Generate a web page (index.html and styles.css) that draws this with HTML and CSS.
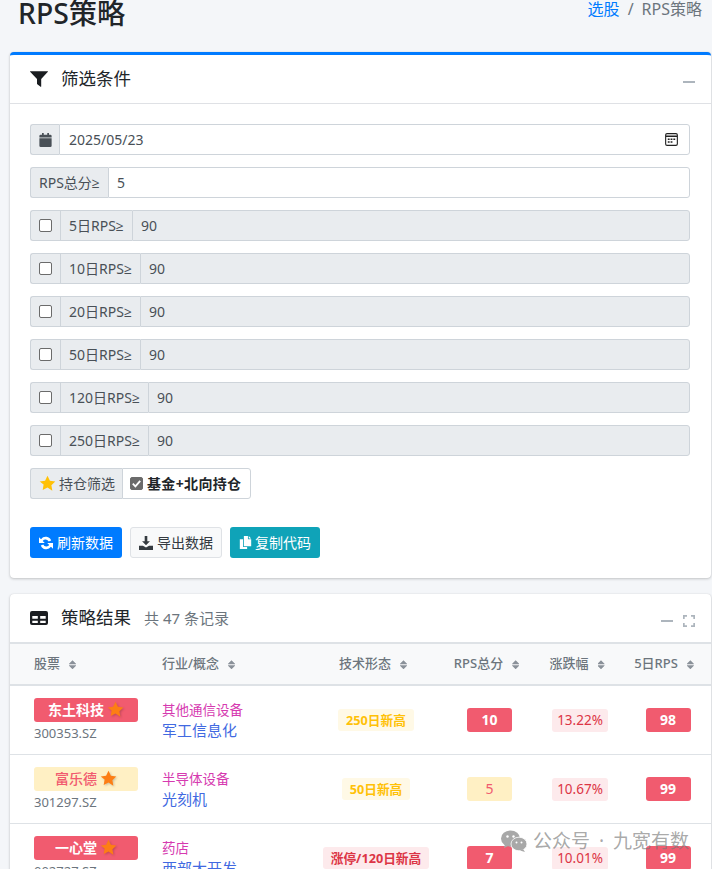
FILE: index.html
```html
<!DOCTYPE html>
<html lang="zh-CN">
<head>
<meta charset="utf-8">
<title>RPS策略</title>
<link rel="stylesheet" href="styles.css">
</head>
<body>
<svg class="defs" width="0" height="0"><defs><path id="st" d="M12 1l3.400 7 7.600 1.100-5.500 5.400 1.300 7.600L12 17.500 5.200 21.100l1.300-7.600L1 9.100 8.600 8z"/></defs></svg>
<div class="page">
  <header class="page-head">
    <h1>RPS策略</h1>
    <nav class="crumbs"><a href="#">选股</a><span class="sep">/</span><span>RPS策略</span></nav>
  </header>

  <section class="card card-primary">
    <div class="card-head">
      <svg class="head-icon" viewBox="0 0 18 16"><path d="M0.300 0.200h17.400c.300 0 .400.300.200.500L11.200 8v7.500c0 .400-.400.500-.600.300L7 13V8L.1.700C-.1.500 0 .200.300.200z" fill="#1a1d21"/></svg>
      <h3>筛选条件</h3>
      <div class="tools"><span class="minus"></span></div>
    </div>
    <div class="card-body">
      <div class="group">
        <span class="addon addon-icon"><svg viewBox="0 0 14 16" width="13" height="14"><path d="M3 0h2v2h4V0h2v2h1.500A1.500 1.500 0 0 1 14 3.500V5H0V3.500A1.500 1.500 0 0 1 1.500 2H3zM0 6h14v8.500a1.500 1.500 0 0 1-1.500 1.500h-11A1.500 1.500 0 0 1 0 14.500z" fill="#495057"/></svg></span>
        <span class="field field-date">2025/05/23
          <svg class="cal" viewBox="0 0 14 14" width="13" height="13"><rect x="0.700" y="0.700" width="12.600" height="12.600" rx="1.500" fill="none" stroke="#222" stroke-width="1.200"/><path d="M1 3.500h12" stroke="#222" stroke-width="1.600"/><path d="M3 6h2v1.500H3zM6 6h2v1.500H6zM9 6h2v1.500H9zM3 9h2v1.500H3zM6 9h2v1.500H6z" fill="#222"/></svg>
        </span>
      </div>
      <div class="group">
        <span class="addon">RPS总分≥</span>
        <span class="field">5</span>
      </div>
      <div class="group">
        <span class="addon addon-check"><span class="box"></span></span>
        <span class="addon">5日RPS≥</span>
        <span class="field field-off">90</span>
      </div>
      <div class="group">
        <span class="addon addon-check"><span class="box"></span></span>
        <span class="addon">10日RPS≥</span>
        <span class="field field-off">90</span>
      </div>
      <div class="group">
        <span class="addon addon-check"><span class="box"></span></span>
        <span class="addon">20日RPS≥</span>
        <span class="field field-off">90</span>
      </div>
      <div class="group">
        <span class="addon addon-check"><span class="box"></span></span>
        <span class="addon">50日RPS≥</span>
        <span class="field field-off">90</span>
      </div>
      <div class="group">
        <span class="addon addon-check"><span class="box"></span></span>
        <span class="addon">120日RPS≥</span>
        <span class="field field-off">90</span>
      </div>
      <div class="group">
        <span class="addon addon-check"><span class="box"></span></span>
        <span class="addon">250日RPS≥</span>
        <span class="field field-off">90</span>
      </div>
      <div class="group group-inline">
        <span class="addon"><svg class="star-y" viewBox="0 0 24 24" width="17" height="17"><use href="#st" fill="#ffc107"/></svg>持仓筛选</span>
        <span class="field field-check">
          <span class="box box-on"><svg viewBox="0 0 14 14" width="13" height="13"><path d="M3 7.200l2.800 2.800L11 4.300" fill="none" stroke="#fff" stroke-width="2"/></svg></span>
          <b>基金+北向持仓</b>
        </span>
      </div>
      <div class="actions">
        <button class="btn btn-blue"><svg viewBox="1 1 14 14" width="14" height="14"><path d="M13.200 5.600A5.800 5.800 0 0 0 3 4.200L1 2.200V8h5.800L4.700 5.900a3.500 3.500 0 0 1 6 0.700zM2.800 10.400A5.800 5.800 0 0 0 13 11.800l2 2V8H9.200l2.100 2.100a3.500 3.500 0 0 1-6 -0.700z" fill="#fff"/></svg>刷新数据</button>
        <button class="btn btn-light"><svg viewBox="0 0 16 16" width="14" height="14"><path d="M6.500 0h3v6h3L8 10.500 3.500 6h3zM0 11h4.500L8 13l3.500-2H16v5H0z" fill="#343a40"/></svg>导出数据</button>
        <button class="btn btn-teal"><svg viewBox="0 0 16 16" width="13" height="15"><path d="M6 0h5v4h4v8.500H6zM12 0l3 3h-3zM1 4h4v9.500h5V16H1z" fill="#fff"/></svg>复制代码</button>
      </div>
    </div>
  </section>

  <section class="card">
    <div class="card-head card-head-table">
      <svg class="head-icon" viewBox="0 0 18 16"><path fill-rule="evenodd" d="M2 1h14a2 2 0 0 1 2 2v10a2 2 0 0 1-2 2H2a2 2 0 0 1-2-2V3a2 2 0 0 1 2-2zM2.300 6v2.700h5.500V6zm7.900 0v2.700h5.500V6zM2.300 10.700v2.300h5.500v-2.300zm7.900 0v2.300h5.500v-2.300z" fill="#1a1d21"/></svg>
      <h3>策略结果</h3>
      <span class="count">共 47 条记录</span>
      <div class="tools"><span class="minus"></span>
        <svg class="expand" viewBox="0 0 12 12" width="12" height="12"><path d="M0.800 4V0.800H4M8 0.800h3.200V4M11.200 8v3.200H8M4 11.200H0.800V8" fill="none" stroke="#adb5bd" stroke-width="1.800"/></svg>
      </div>
    </div>
    <table class="results">
      <colgroup><col class="c1"><col class="c2"><col class="c3"><col class="c4"><col class="c5"><col class="c6"></colgroup>
      <thead>
        <tr>
          <th class="left first">股票<span class="sort"></span></th>
          <th class="left">行业/概念<span class="sort"></span></th>
          <th>技术形态<span class="sort"></span></th>
          <th>RPS总分<span class="sort"></span></th>
          <th>涨跌幅<span class="sort"></span></th>
          <th class="last">5日RPS<span class="sort"></span></th>
        </tr>
      </thead>
      <tbody>
        <tr>
          <td class="first"><span class="name name-red">东土科技<svg class="star" viewBox="0 0 24 24"><use href="#st"/></svg></span><div class="code">300353.SZ</div></td>
          <td class="left"><div class="ind">其他通信设备</div><div class="con">军工信息化</div></td>
          <td><span class="tag tag-y">250日新高</span></td>
          <td><span class="score score-red">10</span></td>
          <td><span class="pct">13.22%</span></td>
          <td class="last"><span class="score score-red">98</span></td>
        </tr>
        <tr>
          <td class="first"><span class="name name-y">富乐德<svg class="star" viewBox="0 0 24 24"><use href="#st"/></svg></span><div class="code">301297.SZ</div></td>
          <td class="left"><div class="ind">半导体设备</div><div class="con">光刻机</div></td>
          <td><span class="tag tag-y">50日新高</span></td>
          <td><span class="score score-y">5</span></td>
          <td><span class="pct">10.67%</span></td>
          <td class="last"><span class="score score-red">99</span></td>
        </tr>
        <tr>
          <td class="first"><span class="name name-red">一心堂<svg class="star" viewBox="0 0 24 24"><use href="#st"/></svg></span><div class="code">002727.SZ</div></td>
          <td class="left"><div class="ind">药店</div><div class="con">西部大开发</div></td>
          <td><span class="tag tag-r">涨停/120日新高</span></td>
          <td><span class="score score-red">7</span></td>
          <td><span class="pct">10.01%</span></td>
          <td class="last"><span class="score score-red">99</span></td>
        </tr>
      </tbody>
    </table>
  </section>
</div>
<div class="watermark">
  <svg viewBox="0 0 26 22" width="26" height="22"><ellipse cx="9.500" cy="8.500" rx="9.500" ry="8" fill="#a8a8a8"/><path d="M4 14l-1 4 5-2.500z" fill="#a8a8a8"/><ellipse cx="18" cy="14" rx="8" ry="6.800" fill="#a8a8a8" stroke="#fff" stroke-width="0.800"/><path d="M22 19l2 3-5-1.500z" fill="#a8a8a8"/><circle cx="6.500" cy="6.500" r="1.200" fill="#fff"/><circle cx="12.500" cy="6.500" r="1.200" fill="#fff"/><circle cx="15.500" cy="12.500" r="1" fill="#fff"/><circle cx="20.500" cy="12.500" r="1" fill="#fff"/></svg>
  <span>公众号 · 九宽有数</span>
</div>
</body>
</html>
```

FILE: styles.css
```css
* { box-sizing: border-box; }
html, body { margin: 0; height: 869px; overflow: hidden; }
body {
  background: #f4f6f9;
  color: #212529;
  font-family: "Noto Sans", "Open Sans", "Noto Sans CJK SC", sans-serif;
  font-size: 14px;
  line-height: 1.5;
}
.defs { position: absolute; }
.page { padding: 0 1px 0 10px; margin-top: -11px; }
.page-head { display: flex; justify-content: space-between; align-items: flex-start; height: 63px; padding: 0 9px 0 8px; }
.page-head h1 { margin: 0; font-size: 28.300px; font-weight: 500; line-height: 49px; color: #212529; }
.crumbs { font-size: 16px; line-height: 24px; color: #6c757d; padding-top: 8px; }
.crumbs a { color: #007bff; text-decoration: none; }
.sep { margin: 0 8px; }

.card {
  background: #fff;
  border-radius: 4px;
  box-shadow: 0 0 1px rgba(0,0,0,.13), 0 1px 3px rgba(0,0,0,.2);
  margin-bottom: 16px;
  overflow: hidden;
}
.card-primary { border-top: 3px solid #007bff; }
.card-head {
  display: flex; align-items: center;
  height: 49px;
  padding: 0 16px 0 20px;
  border-bottom: 1px solid #dfe1e5;
}
.card-head-table { height: 50px; border-bottom: 2px solid #dee2e6; }
.head-icon { width: 18px; height: 16px; margin-right: 13px; flex: none; }
.card-head h3 { margin: 0 0 2px; font-size: 17.500px; font-weight: 400; line-height: 24px; color: #212529; }
.count { margin-left: 13px; color: #6c757d; font-size: 15px; }
.tools { margin-left: auto; display: flex; align-items: center; gap: 10px; padding-top: 5px; }
.minus { display: block; width: 12px; height: 2px; background: #adb5bd; }
.expand { display: block; }

.card-body { padding: 20px 20px 20px; }
.group { display: flex; height: 31px; margin-bottom: 12px; font-size: 14px; color: #495057; margin-right: 1px; }
.addon {
  display: flex; align-items: center;
  padding: 0 8px;
  background: #e9ecef;
  border: 1px solid #ced4da;
  border-right: 0;
  white-space: nowrap;
}
.group > :first-child { border-radius: 3px 0 0 3px; }
.addon-icon { width: 29px; justify-content: center; padding: 0; }
.addon-check { width: 30px; justify-content: center; padding: 0; }
.field {
  flex: 1;
  display: flex; align-items: center;
  padding: 0 8px;
  background: #fff;
  border: 1px solid #ced4da;
  border-radius: 0 3px 3px 0;
}
.field-date { padding-left: 9px; }
.field-off { background: #e9ecef; }
.cal { margin-left: auto; margin-right: 3px; }
.box {
  display: block; width: 13px; height: 13px;
  background: #fff;
  border: 1px solid #6b6b6b;
  border-radius: 2px;
}
.box-on { background: #6b6b6b; margin-right: 4px; flex: none; }
.box-on svg { display: block; margin: -1px; }
.group-inline { width: 221px; margin-bottom: 0; }
.group-inline .addon { padding: 0 7px 0 8px; }
.star-y { margin-right: 3px; }
.field-check { padding: 0 8px 0 7px; white-space: nowrap; }
.field-check b { color: #212529; font-weight: 700; letter-spacing: .35px; }

.actions { display: flex; gap: 8px; margin-top: 28px; }
.btn {
  display: flex; align-items: center; gap: 4px;
  height: 31px; padding: 0 8px;
  font: inherit; font-size: 14px;
  border: 1px solid transparent;
  border-radius: 3px;
  color: #fff;
}
.btn-blue { background: #007bff; }
.btn-light { background: #f8f9fa; border-color: #dfe2e6; color: #343a40; }
.btn-teal { background: #0fa3b8; gap: 3px; }

.results { width: 100%; table-layout: fixed; border-collapse: separate; border-spacing: 0; }
.c1 { width: 140px; } .c2 { width: 166px; } .c3 { width: 120px; }
.c4 { width: 107px; } .c5 { width: 74px; } .c6 { width: 94px; }
.results th {
  height: 42px; padding: 0 6px 0 0;
  background: #f8f9fa;
  border-bottom: 2px solid #dee2e6;
  font-size: 13px; font-weight: 500;
  color: #6c757d;
  text-align: center;
  white-space: nowrap;
}
.results td { height: 69px; padding: 0; text-align: center; border-bottom: 1px solid #dee2e6; }
.results .left { text-align: left; padding-left: 12px; }
.results .first { text-align: left; padding-left: 24px; }
.results td.last { padding-left: 8px; }
.results th.last { padding: 0; }
.sort {
  display: inline-block; vertical-align: -1px;
  width: 7px; height: 9px; margin-left: 9px;
  background: #8a9199;
  clip-path: polygon(50% 0, 100% 40%, 100% 45%, 0 45%, 0 40%, 50% 0, 0 55%, 100% 55%, 100% 60%, 50% 100%, 0 60%, 0 55%);
}
.name {
  display: flex; align-items: center; justify-content: center;
  width: 104px; height: 24px;
  font-size: 14px; font-weight: 700;
  border-radius: 3px;
}
.name-red { background: #f15b6f; color: #fff; }
.name-y { background: #fff0c4; color: #f15b6f; font-weight: 500; }
.star { width: 17px; height: 17px; margin-left: 3px; fill: #fd7e14; filter: drop-shadow(1px 1px 1px rgba(0,0,0,.2)); }
.code { font-size: 13px; line-height: 20px; color: #6c757d; margin-top: 1px; }
.ind { color: #d63ab0; font-size: 13.500px; line-height: 20px; }
.con { color: #4169e1; font-size: 15px; line-height: 20px; }
.tag {
  display: inline-block; padding: 0 8px;
  height: 22px; line-height: 22px;
  font-size: 12.700px; font-weight: 700;
  border-radius: 3px;
}
.tag-y { background: #fff9e6; color: #ffc107; }
.tag-r { background: #fdeaec; color: #dc3545; }
.score {
  display: inline-block; width: 45px; height: 24px; line-height: 24px;
  font-size: 14px; border-radius: 3px;
}
.score-red { background: #f15b6f; color: #fff; font-weight: 700; }
.score-y { background: #fff0c4; color: #f15b6f; }
.pct {
  display: inline-block; padding: 0 5.500px;
  height: 23px; line-height: 23px;
  background: #fdeaec; color: #dc3545;
  font-size: 13.500px; border-radius: 3px;
}
.watermark {
  position: absolute; left: 501px; top: 828px;
  display: flex; align-items: center; gap: 6px;
  color: rgba(120,120,120,.65);
  font-size: 19px; line-height: 26px;
  word-spacing: 4px;
  white-space: nowrap;
}
```
